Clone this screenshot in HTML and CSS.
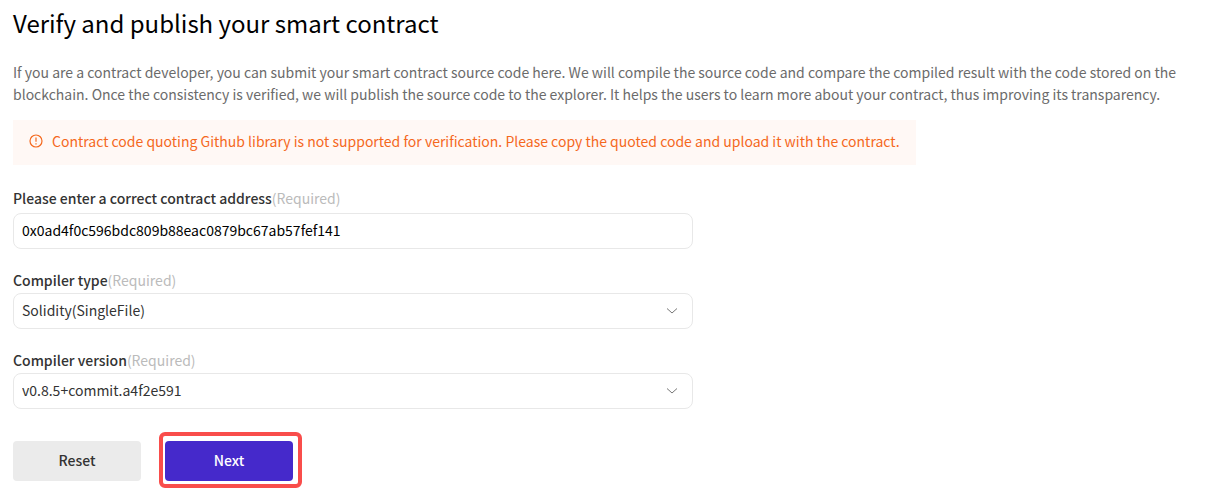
FILE: index.html
```html
<!DOCTYPE html>
<html lang="en">
<head>
<meta charset="utf-8">
<meta name="viewport" content="width=device-width, initial-scale=1">
<title>Verify and publish your smart contract</title>
<link rel="stylesheet" href="styles.css">
</head>
<body>
<main class="page">
  <h1 class="title">Verify and publish your smart contract</h1>
  <p class="intro">If you are a contract developer, you can submit your smart contract source code here. We will compile the source code and compare the compiled result with the code stored on the blockchain. Once the consistency is verified, we will publish the source code to the explorer. It helps the users to learn more about your contract, thus improving its transparency.</p>
  <div class="notice" role="alert">
    <svg class="notice-icon" viewBox="0 0 14 14" aria-hidden="true"><circle cx="7" cy="7" r="6"/><path d="M7 3.5v4.2M7 9.2v1.2"/></svg>
    <span>Contract code quoting Github library is not supported for verification. Please copy the quoted code and upload it with the contract.</span>
  </div>
  <form class="form">
    <div class="field">
      <label class="label label-address" for="address">Please enter a correct contract address<span class="required">(Required)</span></label>
      <input class="control control-input" id="address" type="text" value="0x0ad4f0c596bdc809b88eac0879bc67ab57fef141">
    </div>
    <div class="field">
      <label class="label" for="type">Compiler type<span class="required">(Required)</span></label>
      <div class="select-wrap">
        <select class="control" id="type"><option>Solidity(SingleFile)</option></select>
        <svg class="chevron" viewBox="0 0 12 12" aria-hidden="true"><path d="M1 3.5l5 4.5 5-4.5"/></svg>
      </div>
    </div>
    <div class="field">
      <label class="label" for="version">Compiler version<span class="required">(Required)</span></label>
      <div class="select-wrap">
        <select class="control" id="version"><option>v0.8.5+commit.a4f2e591</option></select>
        <svg class="chevron" viewBox="0 0 12 12" aria-hidden="true"><path d="M1 3.5l5 4.5 5-4.5"/></svg>
      </div>
    </div>
    <div class="actions">
      <button class="button button-reset" type="reset">Reset</button>
      <div class="highlight"><button class="button button-next" type="button">Next</button></div>
    </div>
  </form>
</main>
</body>
</html>
```
FILE: styles.css
```css
* { box-sizing: border-box; }
body { margin: 0; background: #fff; color: #333; font: 14px/22px "Noto Sans CJK SC", sans-serif; }
.page { padding: 7px 20px 8px 13px; }
.title { margin: 0; color: #000; font-size: 24px; line-height: 32px; font-weight: 400; }
.intro { margin: 22px 0 15px; color: #6b6b6b; }
.notice { display: flex; align-items: center; gap: 9px; width: fit-content; padding: 10px 16px 13px; background: #fff8f5; color: #f5681d; }
.notice-icon { width: 14px; height: 14px; flex: none; fill: none; stroke: currentColor; stroke-width: 1.2; }
.form { max-width: 680px; margin-top: 22px; }
.field { margin-bottom: 20px; }
.label { display: block; margin-bottom: 2px; font-weight: 500; line-height: 22px; }
.label-address { margin-bottom: 4px; }
.required { color: #bbb; font-weight: 400; }
.control { display: block; width: 100%; height: 36px; padding: 0 8px 2px; border: 1px solid #e8e8e8; border-radius: 8px; background: #fff; color: #333; font: inherit; appearance: none; }
.control-input { color: #000; }
.select-wrap { position: relative; }
.chevron { position: absolute; right: 15px; top: 12px; width: 12px; height: 12px; fill: none; stroke: #777; pointer-events: none; }
.actions { display: flex; align-items: flex-end; gap: 18px; padding-top: 3px; }
.button { width: 128px; height: 40px; padding: 0 0 2px; border: 0; border-radius: 4px; font: 500 14px/22px "Noto Sans CJK SC", sans-serif; }
.button-reset { margin-bottom: 7px; background: #ebebeb; color: #333; }
.button-next { background: #4529cb; color: #fff; }
.highlight { display: flex; padding: 5px 5px 3px 2px; border: 4px solid #f94d4b; border-radius: 6px; }
```
